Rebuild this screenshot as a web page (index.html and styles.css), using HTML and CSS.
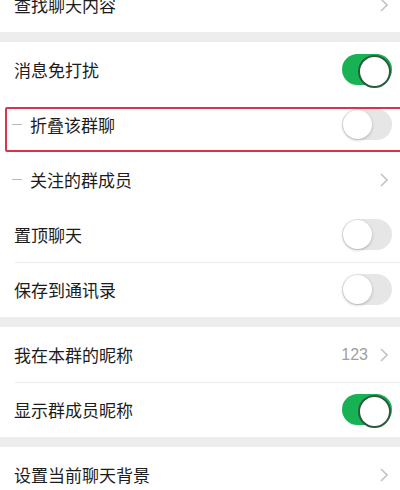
FILE: index.html
```html
<!DOCTYPE html>
<html lang="zh-CN">
<head>
    <meta charset="UTF-8">
    <meta name="viewport" content="width=device-width, initial-scale=1.0">
    <title>聊天信息</title>
    <link rel="stylesheet" href="styles.css">
</head>
<body>
    <div class="settings">
        <!-- 查找 -->
        <div class="group">
            <div class="row">
                <span class="label">查找聊天内容</span>
                <svg class="arrow" viewBox="0 0 8 14"><polyline points="1,1 7,7 1,13"/></svg>
            </div>
        </div>

        <!-- 开关 -->
        <div class="group">
            <div class="row">
                <span class="label">消息免打扰</span>
                <span class="switch on"></span>
            </div>
            <div class="row sub marked">
                <span class="dash"></span>
                <span class="label">折叠该群聊</span>
                <span class="switch"></span>
            </div>
            <div class="row sub">
                <span class="dash"></span>
                <span class="label">关注的群成员</span>
                <svg class="arrow" viewBox="0 0 8 14"><polyline points="1,1 7,7 1,13"/></svg>
            </div>
            <div class="row">
                <span class="label">置顶聊天</span>
                <span class="switch"></span>
            </div>
            <div class="row line">
                <span class="label">保存到通讯录</span>
                <span class="switch"></span>
            </div>
        </div>

        <!-- 昵称 -->
        <div class="group">
            <div class="row">
                <span class="label">我在本群的昵称</span>
                <span class="value">123</span>
                <svg class="arrow" viewBox="0 0 8 14"><polyline points="1,1 7,7 1,13"/></svg>
            </div>
            <div class="row line">
                <span class="label">显示群成员昵称</span>
                <span class="switch on"></span>
            </div>
        </div>

        <div class="group">
            <div class="row">
                <span class="label">设置当前聊天背景</span>
                <svg class="arrow" viewBox="0 0 8 14"><polyline points="1,1 7,7 1,13"/></svg>
            </div>
        </div>
    </div>
</body>
</html>
```

FILE: styles.css
```css
*{
    margin: 0;
    padding: 0;
    box-sizing: border-box;
}
body{
    width: 400px;
    height: 490px;
    overflow: hidden;
    background-color: #ededed;
    font-family: "Noto Sans CJK SC", "Noto Sans", sans-serif;
    color: #1c1c1c;
}

/* 列表已经往上滚了一点 */
.settings{
    margin-top: -23px;
    display: flex;
    flex-direction: column;
    gap: 10px;
}

.group{
    background-color: #fff;
}

.row{
    height: 55px;
    padding: 0 8px 0 14px;
    display: flex;
    align-items: center;
    position: relative;
}

/* 分割线 左边留白 */
.row.line::before{
    content: "";
    position: absolute;
    top: 0;
    left: 15px;
    right: 0;
    border-top: 1px solid #ececec;
}

.label{
    flex: 1;
    font-size: 17px;
    line-height: 1;
}

/* 二级选项前面的小横线 */
.row.sub{
    padding-left: 12px;
}
.dash{
    width: 10px;
    border-top: 1px solid #b8b8b8;
    margin-right: 8px;
}

/* 红框标注 */
.row.marked::after{
    content: "";
    position: absolute;
    top: 10px;
    left: 5px;
    right: -4px;
    bottom: 0;
    border: 2px solid #d9334d;
    border-radius: 2px;
}

.value{
    font-family: "Liberation Sans", Arial, sans-serif;
    font-size: 16px;
    color: #a0a0a0;
    margin-right: 12px;
}

.arrow{
    width: 8px;
    height: 14px;
    margin-right: 4px;
    fill: none;
    stroke: #c4c4c4;
    stroke-width: 1.6;
}

/* 开关 */
.switch{
    width: 50px;
    height: 31px;
    border-radius: 16px;
    background-color: #e6e6e6;
    position: relative;
}
.switch::after{
    content: "";
    position: absolute;
    top: 1px;
    left: 1px;
    width: 29px;
    height: 29px;
    border-radius: 50%;
    background-color: #fff;
    box-shadow: 0 1px 3px rgba(0,0,0,.25);
}
.switch.on{
    background-color: #16b254;
}
.switch.on::after{
    left: auto;
    right: 1px;
    border: 2px solid #2b5b3e;
    box-shadow: none;
}
```
